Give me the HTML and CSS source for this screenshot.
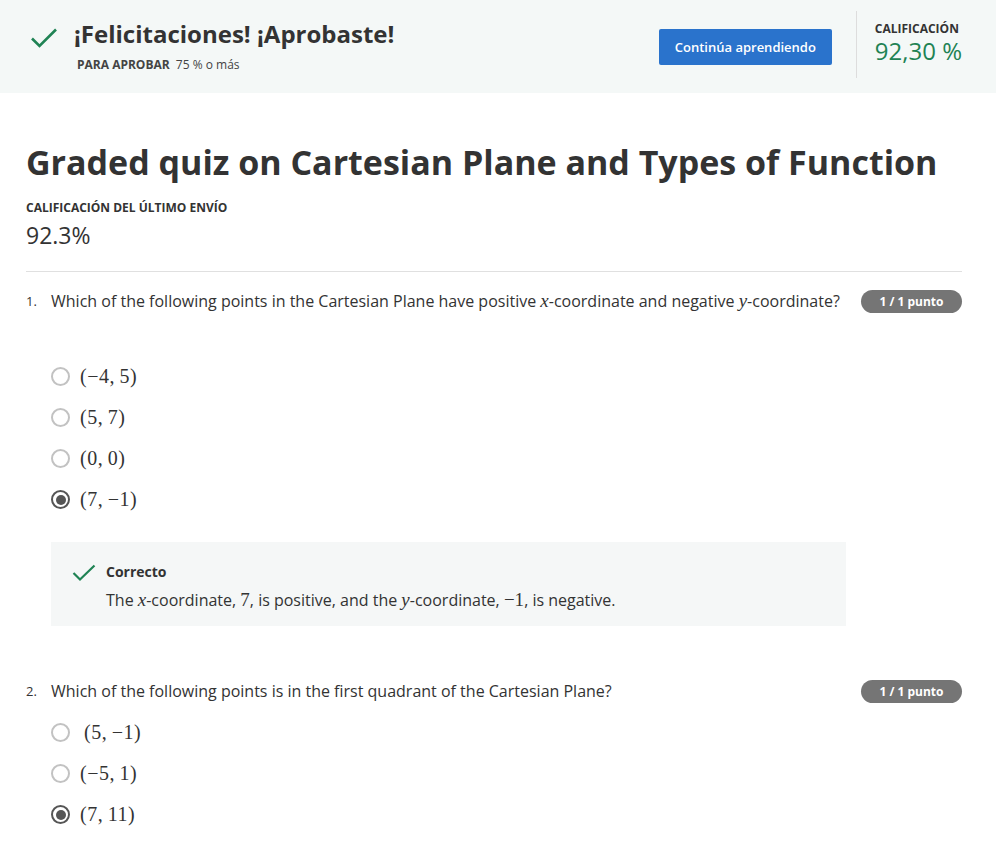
FILE: index.html
```html
<!DOCTYPE html>
<html lang="es">
<head>
<meta charset="utf-8">
<link rel="stylesheet" href="styles.css">
</head>
<body>
<header class="banner">
  <div class="banner-left">
    <svg class="banner-check" width="28" height="22" viewBox="0 0 28 22"><path d="M2 11.5 L9.5 19 L26 2.5" fill="none" stroke="#1f8354" stroke-width="2.6"/></svg>
    <div>
      <div class="banner-title">¡Felicitaciones! ¡Aprobaste!</div>
      <div class="banner-sub"><b>PARA APROBAR</b> 75 % o más</div>
    </div>
  </div>
  <button class="btn">Continúa aprendiendo</button>
  <div class="grade">
    <div class="grade-label">CALIFICACIÓN</div>
    <div class="grade-value">92,30 %</div>
  </div>
</header>

<main class="main">
  <h1 class="title">Graded quiz on Cartesian Plane and Types of Function</h1>
  <div class="label">CALIFICACIÓN DEL ÚLTIMO ENVÍO</div>
  <div class="last">92.3%</div>
  <hr class="rule">

  <section class="q q1">
    <div class="q-head">
      <span class="q-num">1.</span>
      <span class="q-text">Which of the following points in the Cartesian Plane have positive <i class="m">x</i>-coordinate and negative <i class="m">y</i>-coordinate?</span>
      <span class="badge">1 / 1 punto</span>
    </div>
    <ul class="opts">
      <li><span class="radio"></span><span class="m opt">(−4,&thinsp;5)</span></li>
      <li><span class="radio"></span><span class="m opt">(5,&thinsp;7)</span></li>
      <li><span class="radio"></span><span class="m opt">(0,&thinsp;0)</span></li>
      <li><span class="radio on"></span><span class="m opt">(7,&thinsp;−1)</span></li>
    </ul>
    <div class="feedback">
      <svg class="fb-check" width="24" height="18" viewBox="0 0 24 18"><path d="M1.5 9 L8 15.5 L22.5 1.5" fill="none" stroke="#1f8354" stroke-width="2.2"/></svg>
      <div>
        <div class="fb-title">Correcto</div>
        <div class="fb-text">The <i class="m">x</i>-coordinate, <span class="m">7</span>, is positive, and the <i class="m">y</i>-coordinate, <span class="m">−1</span>, is negative.</div>
      </div>
    </div>
  </section>

  <section class="q q2">
    <div class="q-head">
      <span class="q-num">2.</span>
      <span class="q-text">Which of the following points is in the first quadrant of the Cartesian Plane?</span>
      <span class="badge">1 / 1 punto</span>
    </div>
    <ul class="opts tight">
      <li><span class="radio"></span><span class="m opt pad">(5,&thinsp;−1)</span></li>
      <li><span class="radio"></span><span class="m opt">(−5,&thinsp;1)</span></li>
      <li><span class="radio on"></span><span class="m opt">(7,&thinsp;11)</span></li>
    </ul>
  </section>
</main>
</body>
</html>
```

FILE: styles.css
```css
* { box-sizing: border-box; }
body {
  margin: 0;
  font-family: "Open Sans", sans-serif;
  color: #333;
  background: #fff;
}
.banner {
  height: 93px;
  background: #f4f8f7;
  display: flex;
  align-items: flex-start;
  padding: 0 34px 0 30px;
}
.banner-left {
  display: flex;
  align-items: flex-start;
  gap: 16px;
  flex: 1;
  padding-top: 19px;
}
.banner-check { margin-top: 8px; }
.banner-title {
  font-size: 24px;
  font-weight: 700;
  line-height: 30px;
  color: #333;
}
.banner-sub {
  font-size: 12px;
  margin-top: 8px;
  line-height: 16px;
  color: #444;
  padding-left: 3px;
}
.banner-sub b { font-weight: 700; margin-right: 3px; }
.btn {
  margin-top: 29px;
  width: 173px;
  height: 36px;
  background: #2a73cc;
  color: #fff;
  border: none;
  border-radius: 2px;
  font-family: "Open Sans", sans-serif;
  font-size: 13px;
  font-weight: 600;
}
.grade {
  margin: 11px 0 0 24px;
  height: 67px;
  border-left: 1px solid #ddd;
  padding: 11px 0 0 18px;
}
.grade-label {
  font-size: 12px;
  font-weight: 700;
  line-height: 14px;
  color: #333;
}
.grade-value {
  margin-top: 4px;
  font-size: 24px;
  line-height: 22px;
  color: #1f8354;
}
.main {
  margin: 0 34px 0 26px;
  padding-top: 45px;
}
.title {
  margin: 0;
  font-size: 34px;
  font-weight: 700;
  line-height: 48px;
  color: #333;
}
.label {
  margin-top: 14px;
  font-size: 12px;
  font-weight: 700;
  line-height: 16px;
  color: #333;
}
.last {
  margin-top: 4px;
  font-size: 23px;
  line-height: 30px;
  color: #333;
}
.rule {
  border: 0;
  border-top: 1px solid #e0e0e0;
  margin: 21px 0 0;
}
.q { padding-top: 18px; }
.q2 { padding-top: 54px; }
.q-head {
  display: flex;
  align-items: flex-start;
}
.q-num {
  width: 25px;
  font-size: 13px;
  line-height: 22px;
  color: #333;
}
.q-text {
  flex: 1;
  font-size: 16px;
  line-height: 22px;
  color: #333;
}
.m {
  font-family: "Liberation Serif", "DejaVu Serif", serif;
}
.q-text .m, .fb-text .m { font-size: 19px; }
.opt {
  font-size: 20px;
  letter-spacing: 0.5px;
}
.badge {
  background: #757575;
  color: #fff;
  font-size: 12px;
  font-weight: 700;
  border-radius: 12px;
  width: 101px;
  height: 23px;
  line-height: 23px;
  text-align: center;
  margin-left: 16px;
}
.opts {
  list-style: none;
  margin: 0;
  padding: 43px 0 0 25px;
}
.opts.tight { padding-top: 9px; }
.opts li {
  display: flex;
  align-items: center;
  height: 41px;
}
.radio {
  width: 19px;
  height: 19px;
  border-radius: 50%;
  border: 2px solid #c2c2c2;
  margin-right: 10px;
  flex: none;
  position: relative;
}
.radio.on {
  border-color: #555;
}
.radio.on::after {
  content: "";
  position: absolute;
  left: 2.5px; top: 2.5px;
  width: 10px; height: 10px;
  border-radius: 50%;
  background: #555;
}
.opt.pad { padding-left: 4px; }
.feedback {
  margin: 22px 116px 0 25px;
  background: #f5f7f7;
  height: 84px;
  display: flex;
  align-items: flex-start;
  padding: 21px 0 0 21px;
}
.fb-check { margin-right: 10px; margin-top: 1px; }
.fb-title {
  font-size: 14px;
  font-weight: 700;
  line-height: 18px;
}
.fb-text {
  margin-top: 8px;
  font-size: 16px;
  line-height: 22px;
}
```
